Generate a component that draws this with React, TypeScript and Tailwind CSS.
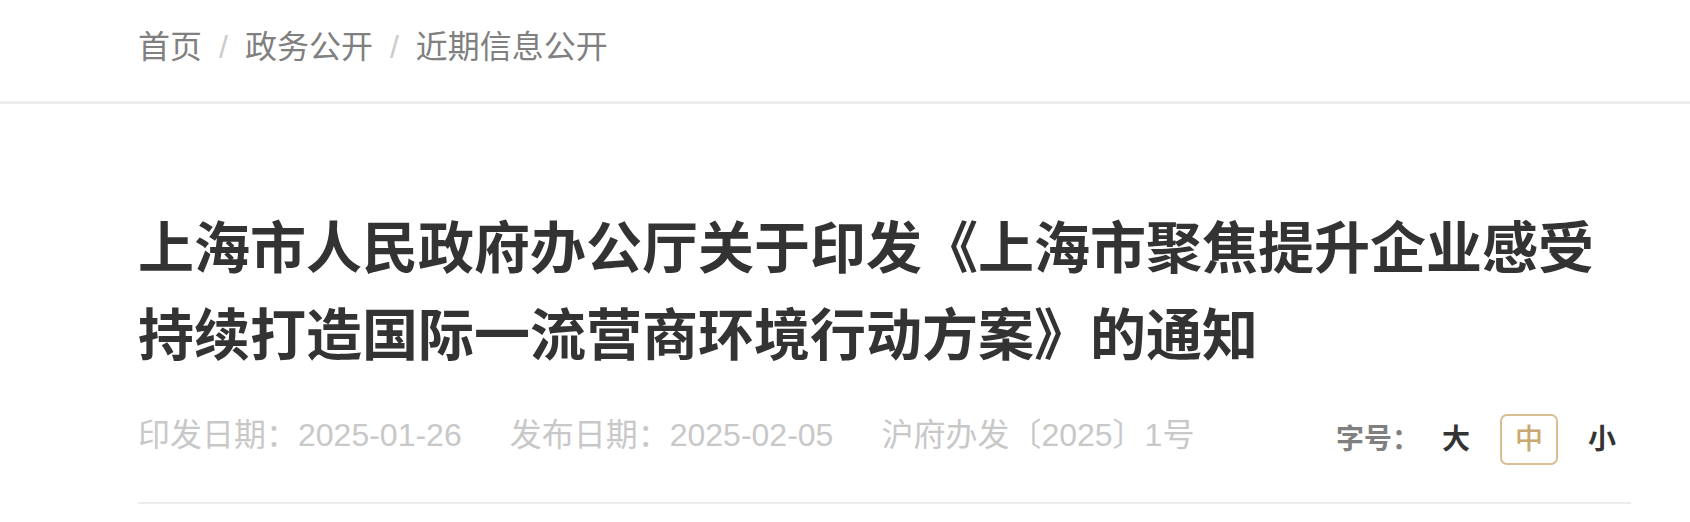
const sans = "font-['Liberation_Sans','Noto_Sans_CJK_SC',sans-serif]";

const crumbs = ['首页', '政务公开', '近期信息公开'];

function Breadcrumb() {
  return (
    <div className="h-[104px] border-b-[3px] border-[#ededed] pl-[138px] pt-[23px]">
      <div className="flex items-center text-[32px] leading-[48px] text-[#808080]">
        {crumbs.map((c, i) => (
          <span key={c} className="flex items-center">
            {i > 0 && <span className="mx-[17px] text-[#cccccc]">/</span>}
            <span>{c}</span>
          </span>
        ))}
      </div>
    </div>
  );
}

function FontSize() {
  const sizes = ['大', '中', '小'];
  const active = '中';
  return (
    <div className="mt-[3px] flex items-center">
      <span className="mr-[7px] text-[28px] font-semibold text-[#808080]">字号：</span>
      <div className="flex gap-[15px]">
        {sizes.map((s) => (
          <button
            key={s}
            className={`flex h-[51px] w-[58px] items-center justify-center rounded-[7px] border-2 text-[28px] ${
              s === active
                ? 'border-[#d6bf92] font-medium text-[#c9a872]'
                : 'border-transparent font-semibold text-[#333333]'
            }`}
          >
            {s}
          </button>
        ))}
      </div>
    </div>
  );
}

export default function App() {
  return (
    <div className={`min-h-[522px] w-[1690px] bg-white ${sans}`}>
      <Breadcrumb />
      <div className="pl-[138px] pr-[59px] pt-[101px]">
        <h1 className="text-[56px] font-bold leading-[87px] text-[#333333]">
          上海市人民政府办公厅关于印发《上海市聚焦提升企业感受持续打造国际一流营商环境行动方案》的通知
        </h1>
        <div className="mt-[32px] flex items-start justify-between border-b-2 border-[#ececec] pb-[37px]">
          <div className="flex gap-[48px] text-[32px] leading-[48px] text-[#c8c8c8]">
            <span>印发日期：2025-01-26</span>
            <span>发布日期：2025-02-05</span>
            <span>沪府办发〔2025〕1号</span>
          </div>
          <FontSize />
        </div>
      </div>
    </div>
  );
}
